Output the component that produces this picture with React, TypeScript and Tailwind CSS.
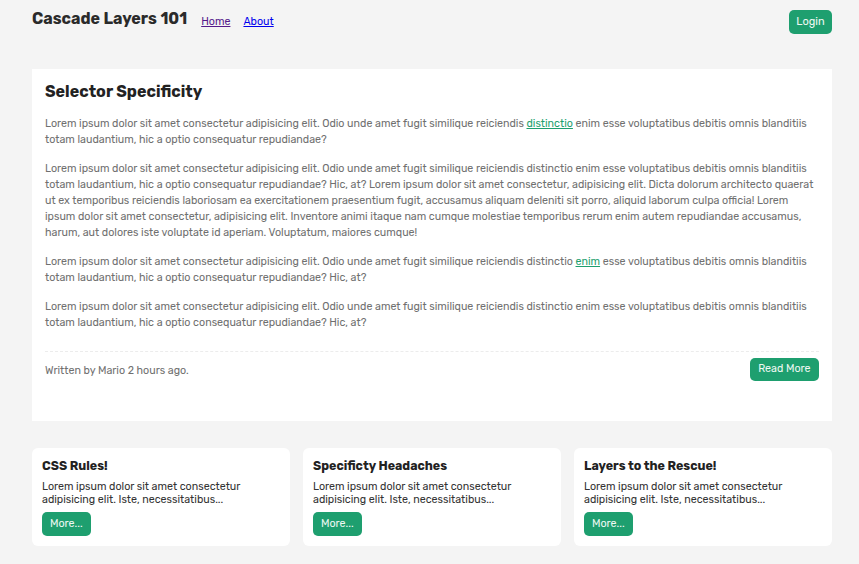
import React from "react";

const font = { fontFamily: "Rubik, Inter, 'Noto Sans', sans-serif" };

const lorem =
  "Lorem ipsum dolor sit amet consectetur adipisicing elit. Odio unde amet fugit similique reiciendis";

function SmallCard({ title }: { title: string }) {
  return (
    <div className="bg-white rounded-[6px] px-[10px] pt-[10px] pb-[10px] flex flex-col">
      <h3 className="text-[12.4px] font-bold text-[#222] leading-[16px]">{title}</h3>
      <p className="text-[10.7px] text-[#333] leading-[13px] mt-[6px]">
        Lorem ipsum dolor sit amet consectetur adipisicing elit. Iste, necessitatibus...
      </p>
      <div className="mt-[4px]">
        <button className="bg-[#1e9f6f] text-[#eef8f3] text-[10.7px] rounded-[5px] px-[8px] h-[24px]">
          More...
        </button>
      </div>
    </div>
  );
}

export default function App() {
  return (
    <div className="min-h-[564px] bg-[#f4f4f4] pb-[18px]" style={font}>
      <header className="flex items-start pl-[32px] pr-[27px] pt-[10px] h-[34px] box-content">
        <h1 className="text-[16px] font-bold text-[#2a2a2a] leading-[20px] -mt-[1px]">Cascade Layers 101</h1>
        <nav className="flex gap-[13px] ml-[14px] text-[10.7px] leading-[14px] mt-[5px]">
          <a href="#" className="underline text-[#551a8b]">Home</a>
          <a href="#" className="underline text-[#0000ee]">About</a>
        </nav>
        <div className="flex-1" />
        <button className="bg-[#1e9f6f] text-[#eef8f3] text-[11px] rounded-[5px] w-[43px] h-[24px]">
          Login
        </button>
      </header>

      <main className="ml-[32px] w-[800px] mt-[25px]">
        <article className="bg-white px-[13px] pt-[12px] pb-[40px]">
          <h2 className="text-[16px] font-bold text-[#222] leading-[22px]">Selector Specificity</h2>
          <div className="text-[10.7px] text-[#707070] leading-[16px] mt-[13px] flex flex-col gap-[13px]">
            <p>
              {lorem}{" "}
              <a href="#" className="text-[#1e9f6f] underline">distinctio</a> enim esse voluptatibus debitis omnis
              blanditiis totam laudantium, hic a optio consequatur repudiandae?
            </p>
            <p>
              {lorem} distinctio enim esse voluptatibus debitis omnis blanditiis totam laudantium, hic a optio
              consequatur repudiandae? Hic, at? Lorem ipsum dolor sit amet consectetur, adipisicing elit. Dicta dolorum
              architecto quaerat ut ex temporibus reiciendis laboriosam ea exercitationem praesentium fugit, accusamus
              aliquam deleniti sit porro, aliquid laborum culpa officia! Lorem ipsum dolor sit amet consectetur,
              adipisicing elit. Inventore animi itaque nam cumque molestiae temporibus rerum enim autem repudiandae
              accusamus, harum, aut dolores iste voluptate id aperiam. Voluptatum, maiores cumque!
            </p>
            <p>
              {lorem} distinctio <a href="#" className="text-[#1e9f6f] underline">enim</a> esse voluptatibus debitis
              omnis blanditiis totam laudantium, hic a optio consequatur repudiandae? Hic, at?
            </p>
            <p>
              {lorem} distinctio enim esse voluptatibus debitis omnis blanditiis totam laudantium, hic a optio
              consequatur repudiandae? Hic, at?
            </p>
          </div>
          <div className="mt-[20px] border-t border-dashed border-[#ececec] pt-[6px] flex items-center justify-between">
            <span className="text-[10.7px] text-[#707070] pt-[4px]">Written by Mario 2 hours ago.</span>
            <button className="bg-[#1e9f6f] text-[#eef8f3] text-[10.7px] rounded-[5px] px-[8.5px] h-[23px]">Read More</button>
          </div>
        </article>

        <section className="grid grid-cols-3 gap-[13px] mt-[27px]">
          <SmallCard title="CSS Rules!" />
          <SmallCard title="Specificty Headaches" />
          <SmallCard title="Layers to the Rescue!" />
        </section>
      </main>
    </div>
  );
}
